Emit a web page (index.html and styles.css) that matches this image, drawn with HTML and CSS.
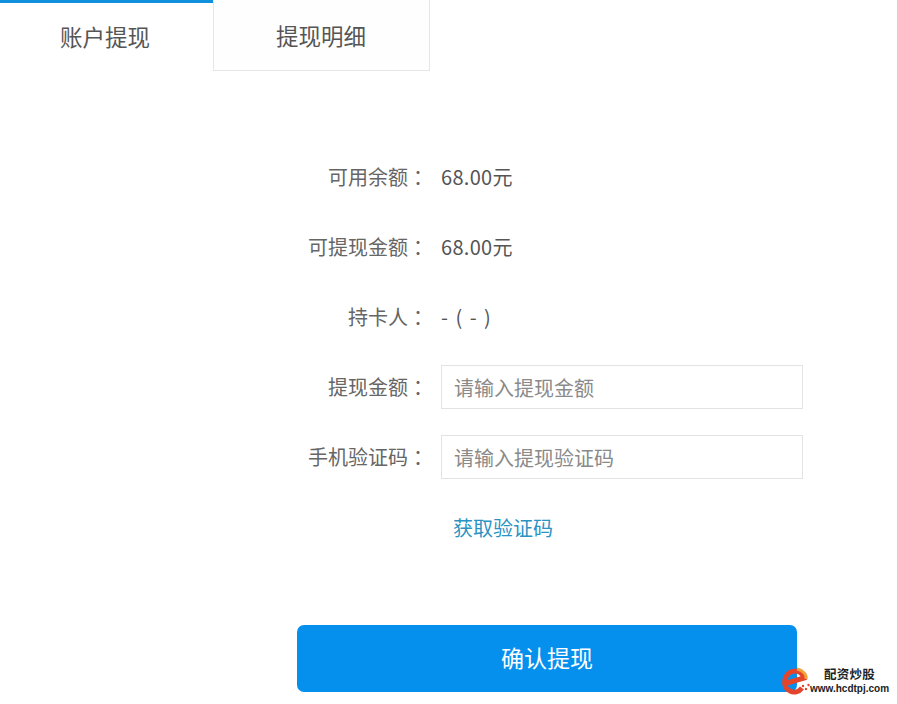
FILE: index.html
```html
<!DOCTYPE html>
<html lang="zh-CN">
<head>
<meta charset="utf-8">
<title>账户提现</title>
<link rel="stylesheet" href="styles.css">
</head>
<body>
<div class="tabs">
  <div class="tab tab-active">账户提现</div>
  <div class="tab tab-idle">提现明细</div>
</div>
<form class="form">
  <div class="row"><span class="label">可用余额<span class="colon" lang="zh-TW">：</span></span><span class="value">68.00元</span></div>
  <div class="row"><span class="label">可提现金额<span class="colon" lang="zh-TW">：</span></span><span class="value">68.00元</span></div>
  <div class="row"><span class="label">持卡人<span class="colon" lang="zh-TW">：</span></span><span class="value value-dash">- ( - )</span></div>
  <div class="row"><span class="label">提现金额<span class="colon" lang="zh-TW">：</span></span><input class="input" placeholder="请输入提现金额"></div>
  <div class="row"><span class="label">手机验证码<span class="colon" lang="zh-TW">：</span></span><input class="input" placeholder="请输入提现验证码"></div>
  <div class="row"><span class="label"></span><a class="code-link">获取验证码</a></div>
  <div class="submit-row"><button class="submit" type="button">确认提现</button></div>
</form>
<div class="watermark">
  <svg class="wm-logo" viewBox="0 0 30 30" width="30" height="30" aria-hidden="true">
    <path d="M7 17L24 12C22 5 14 3 9 7C3 12 3 22 10 25C14 27 19 26 22 22" fill="none" stroke="#e2442c" stroke-width="5"/>
    <path d="M17 3C23 4 27 9 26 13" fill="none" stroke="#f2a33a" stroke-width="3"/>
    <g fill="#e2442c"><circle cx="23" cy="20" r="1.200"/><circle cx="26" cy="23" r="1.200"/><circle cx="28.500" cy="19" r="1.200"/></g>
  </svg>
  <div class="wm-text">
    <div class="wm-title">配资炒股</div>
    <div class="wm-url">www.hcdtpj.com</div>
  </div>
</div>
</body>
</html>
```
FILE: styles.css
```css
* { box-sizing: border-box; }
html, body { margin: 0; padding: 0; }
body {
  width: 897px;
  height: 704px;
  overflow: hidden;
  position: relative;
  background: #fff;
  font-family: "Noto Sans CJK SC", "Liberation Sans", sans-serif;
  color: #555;
}
.tabs { display: flex; height: 71px; }
.tab {
  width: 213px;
  font-size: 22.500px;
  display: flex;
  justify-content: center;
  color: #555;
}
.tab-active {
  border-top: 3px solid #0f8fdc;
  padding: 16px 3px 0 0;
  line-height: 34px;
}
.tab-idle {
  width: 217px;
  background: #fefefe;
  border: 1px solid #e6e6e6;
  border-top: 0;
  padding: 18px 1px 0 0;
  line-height: 34px;
}
.form { padding-top: 84px; }
.row {
  display: flex;
  align-items: center;
  height: 44px;
  margin-bottom: 26px;
  font-size: 20px;
}
.label {
  width: 428px;
  text-align: right;
  color: #666;
  flex: none;
}
.colon { font-family: "Noto Sans CJK TC", sans-serif; vertical-align: -1px; }
.value { margin: 0 0 2px 13px; color: #555; letter-spacing: .3px; }
.value-dash { word-spacing: 3px; letter-spacing: 0; }
.input {
  margin-left: 13px;
  width: 362px;
  height: 44px;
  border: 1px solid #e3e3e3;
  padding: 0 13px 0 12px;
  font: inherit;
  font-size: 20px;
  color: #555;
  outline: 0;
  background: #fff;
}
.input::placeholder { color: #8a8a8a; opacity: 1; }
.code-link { margin-left: 25px; color: #2a93c4; font-size: 20px; }
.submit-row { padding: 50px 0 0 297px; }
.submit {
  display: block;
  width: 500px;
  height: 67px;
  border: 0;
  border-radius: 7px;
  background: #0590ee;
  color: #fff;
  font: inherit;
  font-size: 23px;
  padding: 0 0 3px;
}
.watermark {
  position: absolute;
  left: 780px;
  top: 666px;
  display: flex;
  align-items: center;
  gap: 0;
}
.wm-text { text-align: center; color: #222; font-weight: 700; line-height: 15px; }
.wm-title { font-size: 12.500px; letter-spacing: .3px; }
.wm-url { font-size: 10px; font-family: "Liberation Sans", sans-serif; }
```
